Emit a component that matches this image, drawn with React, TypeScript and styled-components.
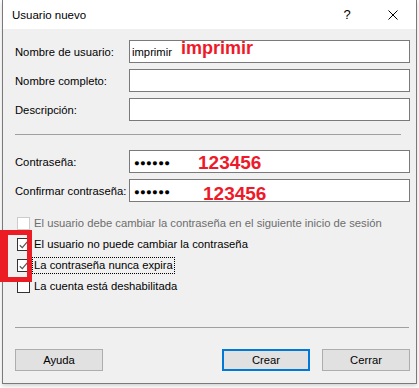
import styled, { createGlobalStyle } from 'styled-components';

const GlobalStyle = createGlobalStyle`
  html, body {
    margin: 0;
    padding: 0;
    background: #ffffff;
  }
  body {
    font-family: 'Liberation Sans', Arial, sans-serif;
    font-size: 11.25px;
    color: #000;
  }
`;

// ── Window frame ──────────────────────────────────────────────────────────────

const Page = styled.div`
  width: 419px;
  height: 388px;
  overflow: hidden;
  position: relative;
`;

const Window = styled.div`
  margin-left: 2px;
  width: 413px;
  height: 383px;
  border: 1px solid #7a7a7a;
  border-top: none;
  background: #f0f0f0;
  box-shadow: 0 2px 4px rgba(0, 0, 0, 0.18);
  display: flex;
  flex-direction: column;
`;

const TitleBar = styled.div`
  height: 29px;
  background: #ffffff;
  display: flex;
  align-items: center;
  padding-left: 9px;
  flex-shrink: 0;
`;

const TitleText = styled.span`
  font-size: 11.5px;
  flex: 1;
  padding-top: 1px;
`;

const TitleButton = styled.span`
  width: 46px;
  height: 29px;
  display: flex;
  align-items: center;
  justify-content: center;
  font-size: 13px;
`;

// ── Form area ─────────────────────────────────────────────────────────────────

const Content = styled.div`
  padding: 11px 6px 0 11px;
  display: flex;
  flex-direction: column;
`;

const FieldGroup = styled.div`
  display: flex;
  flex-direction: column;
  gap: 6px;
`;

const FieldRow = styled.div`
  display: flex;
  align-items: center;
  height: 23px;
`;

const FieldLabel = styled.span`
  width: 114px;
  flex-shrink: 0;
  padding-left: 1px;
  white-space: nowrap;
`;

const InputBox = styled.div`
  position: relative;
  width: 279px;
  height: 21px;
  border: 1px solid #7a7a7a;
  background: #ffffff;
  display: flex;
  align-items: center;
  padding-left: 2px;
  box-sizing: content-box;
`;

const InputValue = styled.span`
  font-size: 11.25px;
`;

const Dots = styled.span`
  font-size: 9.5px;
  letter-spacing: 0.3px;
  padding-left: 2px;
  padding-top: 1px;
`;

// red hand-drawn annotations lying over the inputs
const Annotation = styled.span<{ $left: number; $top: number; $size: number }>`
  position: absolute;
  left: ${({ $left }) => $left}px;
  top: ${({ $top }) => $top}px;
  font-family: 'Liberation Sans', Arial, sans-serif;
  font-weight: 700;
  font-size: ${({ $size }) => $size}px;
  color: #ee1a2a;
  white-space: nowrap;
  line-height: 1;
`;

const Separator = styled.div<{ $top: number; $bottom: number; $width: number }>`
  height: 1px;
  width: ${({ $width }) => $width}px;
  background: #a0a0a0;
  margin: ${({ $top }) => $top}px 0 ${({ $bottom }) => $bottom}px 1px;
`;

// ── Checkboxes ────────────────────────────────────────────────────────────────

const CheckList = styled.div`
  position: relative;
  margin-top: 15px;
  display: flex;
  flex-direction: column;
  gap: 8px;
`;

const CheckRow = styled.div<{ $disabled?: boolean }>`
  display: flex;
  align-items: center;
  height: 13px;
  gap: 3px;
  white-space: nowrap;
  color: ${({ $disabled }) => ($disabled ? '#6d6d6d' : '#000')};
`;

const Box = styled.span<{ $disabled?: boolean }>`
  width: 11px;
  height: 11px;
  border: 1px solid ${({ $disabled }) => ($disabled ? '#cccccc' : '#333333')};
  background: #ffffff;
  display: flex;
  align-items: center;
  justify-content: center;
  flex-shrink: 0;
  margin-left: 3px;
`;

const CheckLabel = styled.span<{ $focused?: boolean }>`
  padding: 1px 1px;
  outline: ${({ $focused }) => ($focused ? '1px dotted #000' : 'none')};
  line-height: 13px;
`;

const RedFrame = styled.div`
  position: absolute;
  left: -14px;
  top: 13px;
  width: 19px;
  height: 42px;
  border: solid #ec1c24;
  border-width: 5px 5px 5px 8px;
  pointer-events: none;
`;

// ── Footer ────────────────────────────────────────────────────────────────────

const ButtonBar = styled.div`
  display: flex;
  align-items: center;
  gap: 12px;
  padding-left: 1px;
`;

const Button = styled.div<{ $default?: boolean }>`
  width: ${({ $default }) => ($default ? 84 : 86)}px;
  height: ${({ $default }) => ($default ? 18 : 20)}px;
  border: ${({ $default }) => ($default ? '2px solid #0078d7' : '1px solid #adadad')};
  background: #e1e1e1;
  display: flex;
  align-items: center;
  justify-content: center;
`;

const Spacer = styled.div`
  flex: 1;
`;

const Check = () => (
  <svg width="9" height="8" viewBox="0 0 9 8">
    <path d="M0.8 4.2 L3.3 6.6 L8.2 0.9" fill="none" stroke="#555" strokeWidth="1.2" />
  </svg>
);

const CloseIcon = () => (
  <svg width="10" height="10" viewBox="0 0 10 10">
    <path d="M0.5 0.5 L9.5 9.5 M9.5 0.5 L0.5 9.5" stroke="#000" strokeWidth="1" />
  </svg>
);

export default function App() {
  return (
    <Page>
      <GlobalStyle />
      <Window>
        <TitleBar>
          <TitleText>Usuario nuevo</TitleText>
          <TitleButton>?</TitleButton>
          <TitleButton>
            <CloseIcon />
          </TitleButton>
        </TitleBar>
        <Content>
          <FieldGroup>
            <FieldRow>
              <FieldLabel>Nombre de usuario:</FieldLabel>
              <InputBox>
                <InputValue>imprimir</InputValue>
                <Annotation $left={51} $top={-2} $size={18}>imprimir</Annotation>
              </InputBox>
            </FieldRow>
            <FieldRow>
              <FieldLabel>Nombre completo:</FieldLabel>
              <InputBox />
            </FieldRow>
            <FieldRow>
              <FieldLabel>Descripción:</FieldLabel>
              <InputBox />
            </FieldRow>
          </FieldGroup>
          <Separator $top={13} $bottom={15} $width={386} />
          <FieldGroup>
            <FieldRow>
              <FieldLabel>Contraseña:</FieldLabel>
              <InputBox>
                <Dots>●●●●●●</Dots>
                <Annotation $left={68} $top={2} $size={19}>123456</Annotation>
              </InputBox>
            </FieldRow>
            <FieldRow>
              <FieldLabel>Confirmar contraseña:</FieldLabel>
              <InputBox>
                <Dots>●●●●●●</Dots>
                <Annotation $left={73} $top={4} $size={19}>123456</Annotation>
              </InputBox>
            </FieldRow>
          </FieldGroup>
          <CheckList>
            <CheckRow $disabled>
              <Box $disabled />
              <CheckLabel>El usuario debe cambiar la contraseña en el siguiente inicio de sesión</CheckLabel>
            </CheckRow>
            <CheckRow>
              <Box>
                <Check />
              </Box>
              <CheckLabel>El usuario no puede cambiar la contraseña</CheckLabel>
            </CheckRow>
            <CheckRow>
              <Box>
                <Check />
              </Box>
              <CheckLabel $focused>La contraseña nunca expira</CheckLabel>
            </CheckRow>
            <CheckRow>
              <Box />
              <CheckLabel>La cuenta está deshabilitada</CheckLabel>
            </CheckRow>
            <RedFrame />
          </CheckList>
          <Separator $top={34} $bottom={21} $width={394} />
          <ButtonBar>
            <Button>Ayuda</Button>
            <Spacer />
            <Button $default>Crear</Button>
            <Button>Cerrar</Button>
          </ButtonBar>
        </Content>
      </Window>
    </Page>
  );
}
